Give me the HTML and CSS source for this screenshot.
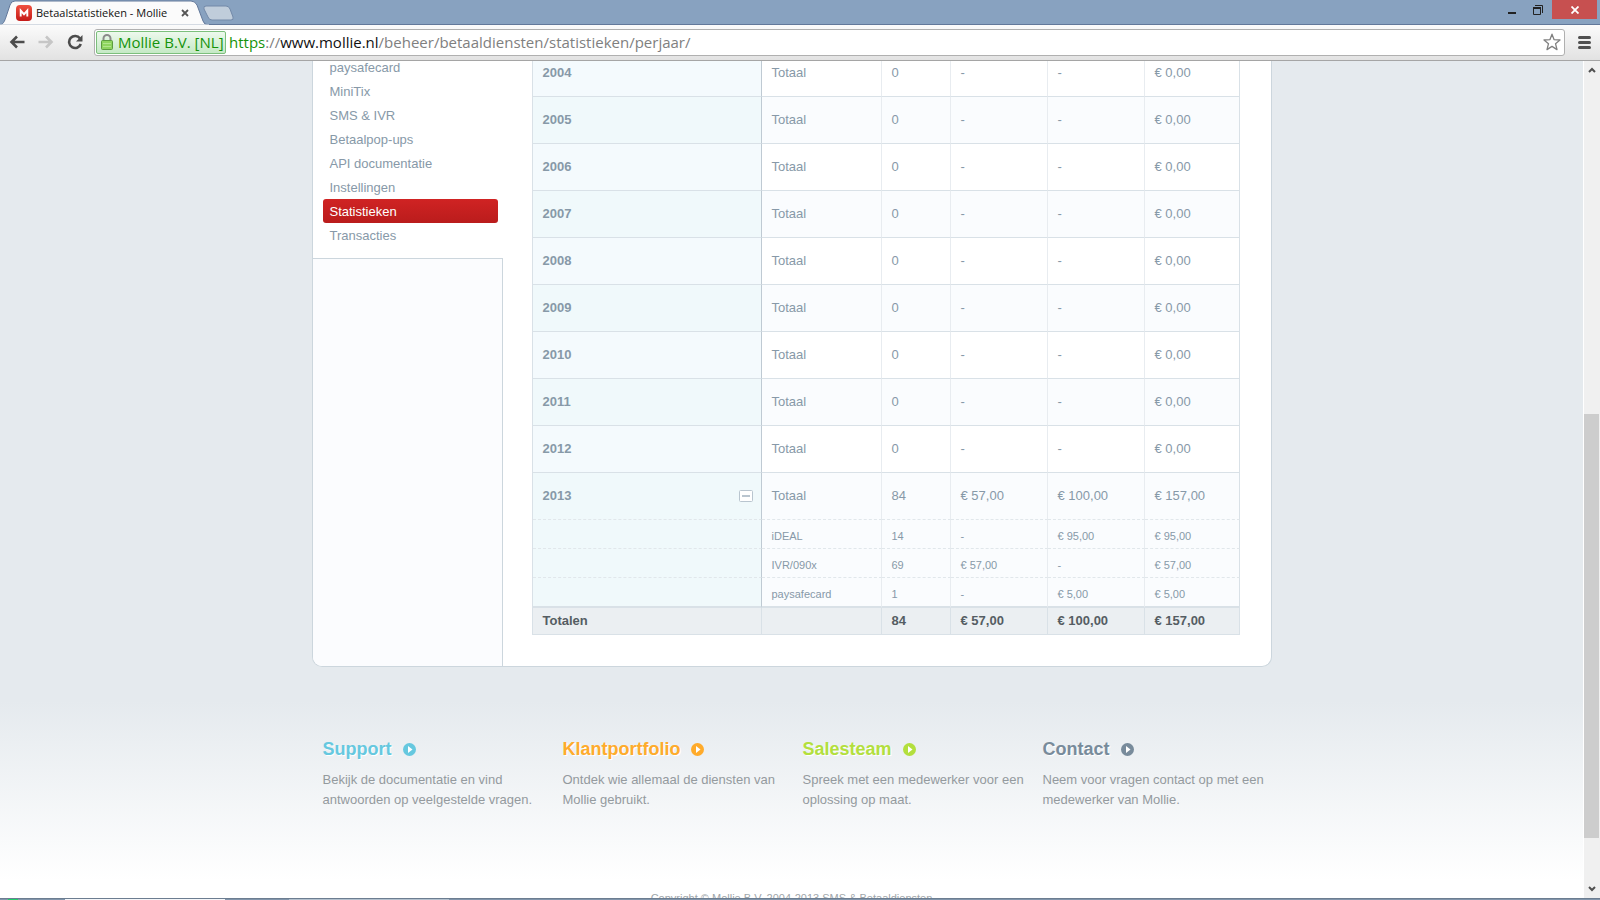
FILE: index.html
```html
<!DOCTYPE html>
<html lang="nl">
<head>
<meta charset="utf-8">
<title>Betaalstatistieken - Mollie</title>
<link rel="stylesheet" href="styles.css">
</head>
<body>
<div class="browser">
  <header class="tabstrip">
    <svg class="tabshape" viewBox="0 0 240 25" aria-hidden="true">
      <path d="M0 25C4 24 5 20 7 14L10 5Q11 1 15 1H191Q195 1 197 5L203 21Q204 25 209 25Z" fill="#fbfbfb" stroke="#62789a"/>
      <path d="M0 25.500H209" stroke="#fbfbfb" stroke-width="2"/>
      <path d="M206 6H226Q229 6 230 9L233 17Q234 20 231 20H212Q209 20 208 17L204 9Q203 6 206 6Z" fill="#c0cddb" stroke="#7289a8"/>
    </svg>
    <div class="tab">
      <svg class="favicon" viewBox="0 0 16 16" aria-hidden="true"><defs><linearGradient id="red" x2="0" y2="1"><stop stop-color="#f0503f"/><stop offset="1" stop-color="#c41a18"/></linearGradient></defs><rect width="16" height="16" rx="4" fill="url(#red)"/><path d="M4.700 11.500V5.500L8 9.200L11.300 5.500V11.500" fill="none" stroke="#fff" stroke-width="1.900"/></svg>
      <span class="tabtitle">Betaalstatistieken - Mollie</span>
      <button class="plain close" aria-label="Tabblad sluiten"><svg width="8" height="8" viewBox="0 0 8 8"><path d="M1 1L7 7M7 1L1 7" stroke="#555" stroke-width="1.800"/></svg></button>
    </div>
    <div class="winbuttons">
      <button class="plain win" aria-label="Minimaliseren"><svg width="10" height="10" viewBox="0 0 10 10"><path d="M1 8H9" stroke="#222" stroke-width="2"/></svg></button>
      <button class="plain win" aria-label="Herstellen"><svg width="12" height="12" viewBox="0 0 12 12"><path d="M3 1.500H10.500V9" fill="none" stroke="#222"/><path d="M1.500 4V10.500H8.500V4" fill="none" stroke="#222"/><path d="M1 4H9" stroke="#222" stroke-width="2"/></svg></button>
      <button class="plain win winclose" aria-label="Sluiten"><svg width="8" height="8" viewBox="0 0 8 8"><path d="M.5 .5L7.500 7.500M7.500 .5L.5 7.500" stroke="#fff" stroke-width="1.800"/></svg></button>
    </div>
  </header>
  <nav class="toolbar" aria-label="Navigatie">
    <button class="plain tool" aria-label="Vorige"><svg width="16" height="14" viewBox="0 0 16 14"><path d="M15.500 7H3M8 1.500L2.500 7L8 12.500" fill="none" stroke="#4c4c4c" stroke-width="2.600"/></svg></button>
    <button class="plain tool" aria-label="Volgende"><svg width="16" height="14" viewBox="0 0 16 14"><path d="M.5 7H13M8 1.500L13.500 7L8 12.500" fill="none" stroke="#c6c6c6" stroke-width="2.600"/></svg></button>
    <button class="plain tool" aria-label="Vernieuwen"><svg width="16" height="16" viewBox="0 0 16 16"><path d="M13 4.500A6 6 0 1 0 13.800 10" fill="none" stroke="#4c4c4c" stroke-width="2.600"/><path d="M15.500 1V7.500H9Z" fill="#4c4c4c"/></svg></button>
    <div class="omnibox">
      <span class="cert"><svg width="12" height="16" viewBox="0 0 12 16" aria-hidden="true"><path d="M2.500 7V4.500A3.500 3.500 0 0 1 9.500 4.500V7" fill="none" stroke="#8b8b8b" stroke-width="2"/><rect x=".5" y="6.500" width="11" height="9" rx="1" fill="#8ed45e" stroke="#5c9c40"/><path d="M2 9.500H10M2 12.500H10" stroke="#b0e68c"/></svg>Mollie B.V. [NL]</span>
      <span class="url"><span class="secure">https</span>://<span class="host">www.mollie.nl</span>/beheer/betaaldiensten/statistieken/perjaar/</span>
      <button class="plain star" aria-label="Bladwijzer"><svg width="18" height="18" viewBox="0 0 18 18"><path d="M9 1.200L11 6.600L17 7L12.500 10.700L14 16.600L9 13.400L4 16.600L5.500 10.700L1 7L7 6.600Z" fill="#fff" stroke="#808080" stroke-width="1.300" stroke-linejoin="round"/></svg></button>
    </div>
    <button class="plain menu" aria-label="Menu"><svg width="13" height="13" viewBox="0 0 13 13"><path d="M1.500 1.500H11.500M1.500 6.500H11.500M1.500 11.500H11.500" stroke="#505050" stroke-width="3" stroke-linecap="round"/></svg></button>
  </nav>
  <div class="viewport">
    <div class="page">
      <main class="panel">
        <aside class="side">
          <ul class="sidemenu">
            <li><a href="#">paysafecard</a></li>
            <li><a href="#">MiniTix</a></li>
            <li><a href="#">SMS &amp; IVR</a></li>
            <li><a href="#">Betaalpop-ups</a></li>
            <li><a href="#">API documentatie</a></li>
            <li><a href="#">Instellingen</a></li>
            <li><a href="#" class="active">Statistieken</a></li>
            <li><a href="#">Transacties</a></li>
          </ul>
          <div class="sidefill"></div>
        </aside>
        <section class="content">
          <table class="stats">
            <colgroup><col class="c-year"><col class="c-type"><col class="c-count"><col class="c-money"><col class="c-money"><col class="c-last"></colgroup>
            <tbody>
              <tr><th scope="row">2004</th><td>Totaal</td><td>0</td><td>-</td><td>-</td><td>€ 0,00</td></tr>
              <tr class="alt"><th scope="row">2005</th><td>Totaal</td><td>0</td><td>-</td><td>-</td><td>€ 0,00</td></tr>
              <tr><th scope="row">2006</th><td>Totaal</td><td>0</td><td>-</td><td>-</td><td>€ 0,00</td></tr>
              <tr class="alt"><th scope="row">2007</th><td>Totaal</td><td>0</td><td>-</td><td>-</td><td>€ 0,00</td></tr>
              <tr><th scope="row">2008</th><td>Totaal</td><td>0</td><td>-</td><td>-</td><td>€ 0,00</td></tr>
              <tr class="alt"><th scope="row">2009</th><td>Totaal</td><td>0</td><td>-</td><td>-</td><td>€ 0,00</td></tr>
              <tr><th scope="row">2010</th><td>Totaal</td><td>0</td><td>-</td><td>-</td><td>€ 0,00</td></tr>
              <tr class="alt"><th scope="row">2011</th><td>Totaal</td><td>0</td><td>-</td><td>-</td><td>€ 0,00</td></tr>
              <tr><th scope="row">2012</th><td>Totaal</td><td>0</td><td>-</td><td>-</td><td>€ 0,00</td></tr>
              <tr class="alt open"><th scope="row"><div class="yearcell">2013<button class="plain toggle" aria-label="Inklappen"><svg width="14" height="12" viewBox="0 0 14 12"><rect x=".5" y=".5" width="13" height="11" rx="1" fill="#fff" stroke="#b9c5cf"/><path d="M3 6H11" stroke="#b9c5cf" stroke-width="2"/></svg></button></div></th><td>Totaal</td><td>84</td><td>€ 57,00</td><td>€ 100,00</td><td>€ 157,00</td></tr>
              <tr class="alt sub"><th></th><td>iDEAL</td><td>14</td><td>-</td><td>€ 95,00</td><td>€ 95,00</td></tr>
              <tr class="alt sub"><th></th><td>IVR/090x</td><td>69</td><td>€ 57,00</td><td>-</td><td>€ 57,00</td></tr>
              <tr class="alt sub end"><th></th><td>paysafecard</td><td>1</td><td>-</td><td>€ 5,00</td><td>€ 5,00</td></tr>
            </tbody>
            <tfoot>
              <tr><th scope="row">Totalen</th><td></td><td>84</td><td>€ 57,00</td><td>€ 100,00</td><td>€ 157,00</td></tr>
            </tfoot>
          </table>
        </section>
      </main>
      <footer class="links">
        <section class="support"><h2><a href="#">Support <svg width="13" height="13" viewBox="0 0 13 13"><circle cx="6.500" cy="6.500" r="6.500" fill="currentColor"/><path d="M5 3L9.500 6.500L5 10Z" fill="#fff"/></svg></a></h2><p>Bekijk de documentatie en vind antwoorden op veelgestelde vragen.</p></section>
        <section class="clients"><h2><a href="#">Klantportfolio <svg width="13" height="13" viewBox="0 0 13 13"><circle cx="6.500" cy="6.500" r="6.500" fill="currentColor"/><path d="M5 3L9.500 6.500L5 10Z" fill="#fff"/></svg></a></h2><p>Ontdek wie allemaal de diensten van Mollie gebruikt.</p></section>
        <section class="sales"><h2><a href="#">Salesteam <svg width="13" height="13" viewBox="0 0 13 13"><circle cx="6.500" cy="6.500" r="6.500" fill="currentColor"/><path d="M5 3L9.500 6.500L5 10Z" fill="#fff"/></svg></a></h2><p>Spreek met een medewerker voor een oplossing op maat.</p></section>
        <section class="contact"><h2><a href="#">Contact <svg width="13" height="13" viewBox="0 0 13 13"><circle cx="6.500" cy="6.500" r="6.500" fill="currentColor"/><path d="M5 3L9.500 6.500L5 10Z" fill="#fff"/></svg></a></h2><p>Neem voor vragen contact op met een medewerker van Mollie.</p></section>
      </footer>
      <p class="copyright">Copyright © Mollie B.V. 2004-2013 SMS &amp; Betaaldiensten</p>
    </div>
    <div class="scrollbar">
      <svg width="8" height="6" viewBox="0 0 8 6"><path d="M1 5L4 2L7 5" fill="none" stroke="#505050" stroke-width="2"/></svg>
      <div class="track"><div class="thumb"></div></div>
      <svg width="8" height="6" viewBox="0 0 8 6"><path d="M1 1L4 4L7 1" fill="none" stroke="#505050" stroke-width="2"/></svg>
    </div>
  </div>
  <div class="taskbar"><span class="start"></span><span class="task"></span><span class="task idle"></span></div>
</div>
</body>
</html>
```
FILE: styles.css
```css
* { box-sizing: border-box; }
body { margin: 0; font: 13px/20px "Liberation Sans", Arial, sans-serif; color: #8799a8; }
a { color: inherit; text-decoration: none; }
.plain { border: 0; padding: 0; background: none; display: flex; align-items: center; justify-content: center; }
svg { flex: none; }
.browser { height: 100vh; display: flex; flex-direction: column; overflow: hidden; }

.tabstrip { flex: none; height: 25px; background: #88a2c0; border-bottom: 1px solid #62789a; position: relative; display: flex; justify-content: space-between; }
.tabshape { position: absolute; left: 0; top: 0; width: 240px; height: 25px; }
.tab { position: relative; display: flex; align-items: center; padding: 2px 0 0 16px; }
.favicon { width: 16px; height: 16px; margin-right: 4px; }
.tabtitle { font: 11px/16px "Open Sans", "Noto Sans", sans-serif; color: #111; width: 144px; white-space: nowrap; }
.close { width: 10px; height: 16px; }
.winbuttons { display: flex; padding-right: 3px; }
.win { width: 26px; height: 19px; }
.winclose { width: 45px; background: #c75050; margin-left: 1px; }

.toolbar { flex: none; height: 36px; display: flex; align-items: center; padding: 0 9px 1px 5px; background: linear-gradient(#fbfbfb, #e2e2e2); border-bottom: 1px solid #a5a5a5; }
.tool { width: 24px; height: 24px; margin-right: 5px; }
.omnibox { flex: 1; height: 27px; margin: 0 12px 0 2px; padding: 0 3px 0 1px; display: flex; align-items: center; border: 1px solid #b0b0b0; border-radius: 3px; background: #fff; font: 15px/22px "Open Sans", "Noto Sans", sans-serif; white-space: nowrap; }
.cert { display: flex; align-items: center; gap: 5px; height: 23px; width: 130px; padding-left: 4px; border: 1px solid #7cbf7c; border-radius: 2px; background: linear-gradient(#edf9ed, #c5e9c5); color: #16930b; }
.url { flex: 1; margin-left: 3px; color: #808080; }
.secure { color: #16930b; }
.host { color: #111; }
.star { width: 18px; height: 20px; }
.menu { width: 14px; height: 20px; }

.viewport { flex: 1; min-height: 0; display: flex; overflow: hidden; }
.page { flex: 1; overflow: hidden; background: linear-gradient(#e5eaee 0, #e5eaee 640px, #fff 820px); }
.panel { width: 960px; margin: 0 auto; display: flex; background: #fff; border: 1px solid #ccd6dd; border-top: 0; border-radius: 0 0 10px 10px; overflow: hidden; }
.side { flex: none; width: 190px; display: flex; flex-direction: column; }
.sidemenu { list-style: none; margin: -6px 0 0; padding: 0 5px 11px 10px; }
.sidemenu a { display: block; height: 24px; line-height: 26px; padding-left: 7px; border-radius: 3px; }
.sidemenu .active { color: #fff; background: linear-gradient(#d02323, #ba1c1c); }
.sidefill { flex: 1; background: #fbfcfe; border-top: 1px solid #ccd6dd; border-right: 1px solid #ccd6dd; }
.content { flex: 1; padding: 0 31px 31px 29px; }

.stats { width: 100%; table-layout: fixed; border-collapse: separate; border-spacing: 0; border-left: 1px solid #d9e1e7; margin-top: -11px; }
.c-year { width: 229px; }
.c-type { width: 120px; }
.c-count { width: 69px; }
.c-money { width: 97px; }
.c-last { width: 95px; }
.stats th, .stats td { height: 47px; padding: 0 10px; text-align: left; vertical-align: middle; border-bottom: 1px solid #d9e1e7; border-right: 1px solid #e8ecf0; }
.stats th { background: #f4fafd; border-right-color: #bfcad3; color: #8799a8; }
.stats td:last-child { border-right-color: #d9e1e7; }
.stats .alt td { background: #fafcfe; }
.stats .alt th { background: #f0f9fb; }
.stats .open > *, .stats .sub > * { border-bottom: 1px dashed #e1e7eb; }
.stats .sub > * { height: 29px; font-size: 11px; line-height: 18px; padding-top: 3px; }
.stats .end > * { height: 30px; border-bottom: 2px solid #d9e1e7; }
.stats tfoot th, .stats tfoot td { height: 27px; background: #ebeff2; border-color: #d9e1e7; color: #555d63; font-weight: bold; }
.yearcell { display: flex; align-items: center; justify-content: space-between; }
.toggle { width: 14px; height: 12px; margin-right: -2px; }

.links { width: 960px; margin: 0 auto; padding: 71px 0 0 11px; display: grid; grid-template-columns: 240px 240px 240px 229px; }
.links h2 { margin: 0 0 10px; font-size: 18px; line-height: 22px; text-shadow: 1px 1px 0 #fff; }
.links h2 svg { margin-left: 6px; vertical-align: -1px; }
.links p { margin: 0; color: #949a9e; }
.support h2 { color: #66c8df; }
.clients h2 { color: #ffab2b; }
.sales h2 { color: #b3df3d; }
.contact h2 { color: #788b9b; }
.copyright { margin: 78px 0 0; text-align: center; font-size: 11px; line-height: 20px; color: #a0a6aa; white-space: nowrap; }

.scrollbar { flex: none; width: 17px; background: #f0f0f0; border-left: 1px solid #fff; display: flex; flex-direction: column; align-items: center; padding: 6px 0; gap: 6px; }
.track { flex: 1; width: 100%; display: flex; flex-direction: column; padding: 335px 1px 42px 0; }
.thumb { flex: 1; background: #cdcdcd; }
.taskbar { flex: none; height: 2px; background: #8195ab; border-top: 1px solid #6c7d90; display: flex; }
.start { width: 10px; background: #21d06c; margin-left: 8px; }
.task { width: 160px; margin-left: 47px; background: #f4f6f9; }
.task.idle { margin-left: 64px; background: #b4c1ce; }
```
